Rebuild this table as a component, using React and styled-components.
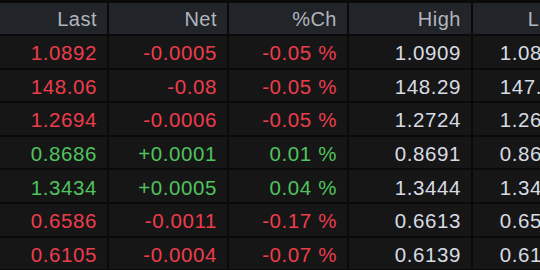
import React from "react";
import styled, { createGlobalStyle } from "styled-components";

const GlobalStyle = createGlobalStyle`
  html, body {
    margin: 0;
    padding: 0;
    background: #0a0a0b;
    overflow: hidden;
  }
`;

const Page = styled.div`
  width: 540px;
  height: 270px;
  overflow: hidden;
  padding-top: 3px;
  box-sizing: border-box;
  background: #0a0a0b;
`;

const Grid = styled.div`
  display: grid;
  grid-template-columns: 107px 118px 118px 122px 103px;
  grid-auto-rows: 31.6px;
  grid-template-rows: 31px;
  gap: 2px;
  width: max-content;
  font-family: "Liberation Sans", Arial, sans-serif;
`;

const HeadCell = styled.div`
  background: #212429;
  color: #b0b5be;
  font-size: 20px;
  letter-spacing: 0.5px;
  display: flex;
  align-items: center;
  justify-content: flex-end;
  padding: 1px 10px 0 0;
  white-space: nowrap;
`;

const toneColor = {
  up: "#4fc35e",
  down: "#ec3d4b",
  flat: "#d7dbe3",
};

const Cell = styled.div`
  background: #161617;
  color: ${({ $tone }) => toneColor[$tone]};
  font-size: 20.5px;
  letter-spacing: 0.6px;
  display: flex;
  align-items: center;
  justify-content: flex-end;
  padding: 3px 10px 0 0;
  white-space: nowrap;
`;

const columns = ["Last", "Net", "%Ch", "High", "Low"];

const rows = [
  { last: "1.0892", net: "-0.0005", pct: "-0.05 %", high: "1.0909", low: "1.0875" },
  { last: "148.06", net: "-0.08", pct: "-0.05 %", high: "148.29", low: "147.91" },
  { last: "1.2694", net: "-0.0006", pct: "-0.05 %", high: "1.2724", low: "1.2681" },
  { last: "0.8686", net: "+0.0001", pct: "0.01 %", high: "0.8691", low: "0.8672" },
  { last: "1.3434", net: "+0.0005", pct: "0.04 %", high: "1.3444", low: "1.3421" },
  { last: "0.6586", net: "-0.0011", pct: "-0.17 %", high: "0.6613", low: "0.6579" },
  { last: "0.6105", net: "-0.0004", pct: "-0.07 %", high: "0.6139", low: "0.6101" },
];

export default function App() {
  return (
    <>
      <GlobalStyle />
      <Page>
        <Grid>
          {columns.map((c) => (
            <HeadCell key={c}>{c}</HeadCell>
          ))}
          {rows.map((r) => {
            const tone = r.net.startsWith("+") ? "up" : "down";
            return (
              <React.Fragment key={r.last}>
                <Cell $tone={tone}>{r.last}</Cell>
                <Cell $tone={tone}>{r.net}</Cell>
                <Cell $tone={tone}>{r.pct}</Cell>
                <Cell $tone="flat">{r.high}</Cell>
                <Cell $tone="flat">{r.low}</Cell>
              </React.Fragment>
            );
          })}
        </Grid>
      </Page>
    </>
  );
}
